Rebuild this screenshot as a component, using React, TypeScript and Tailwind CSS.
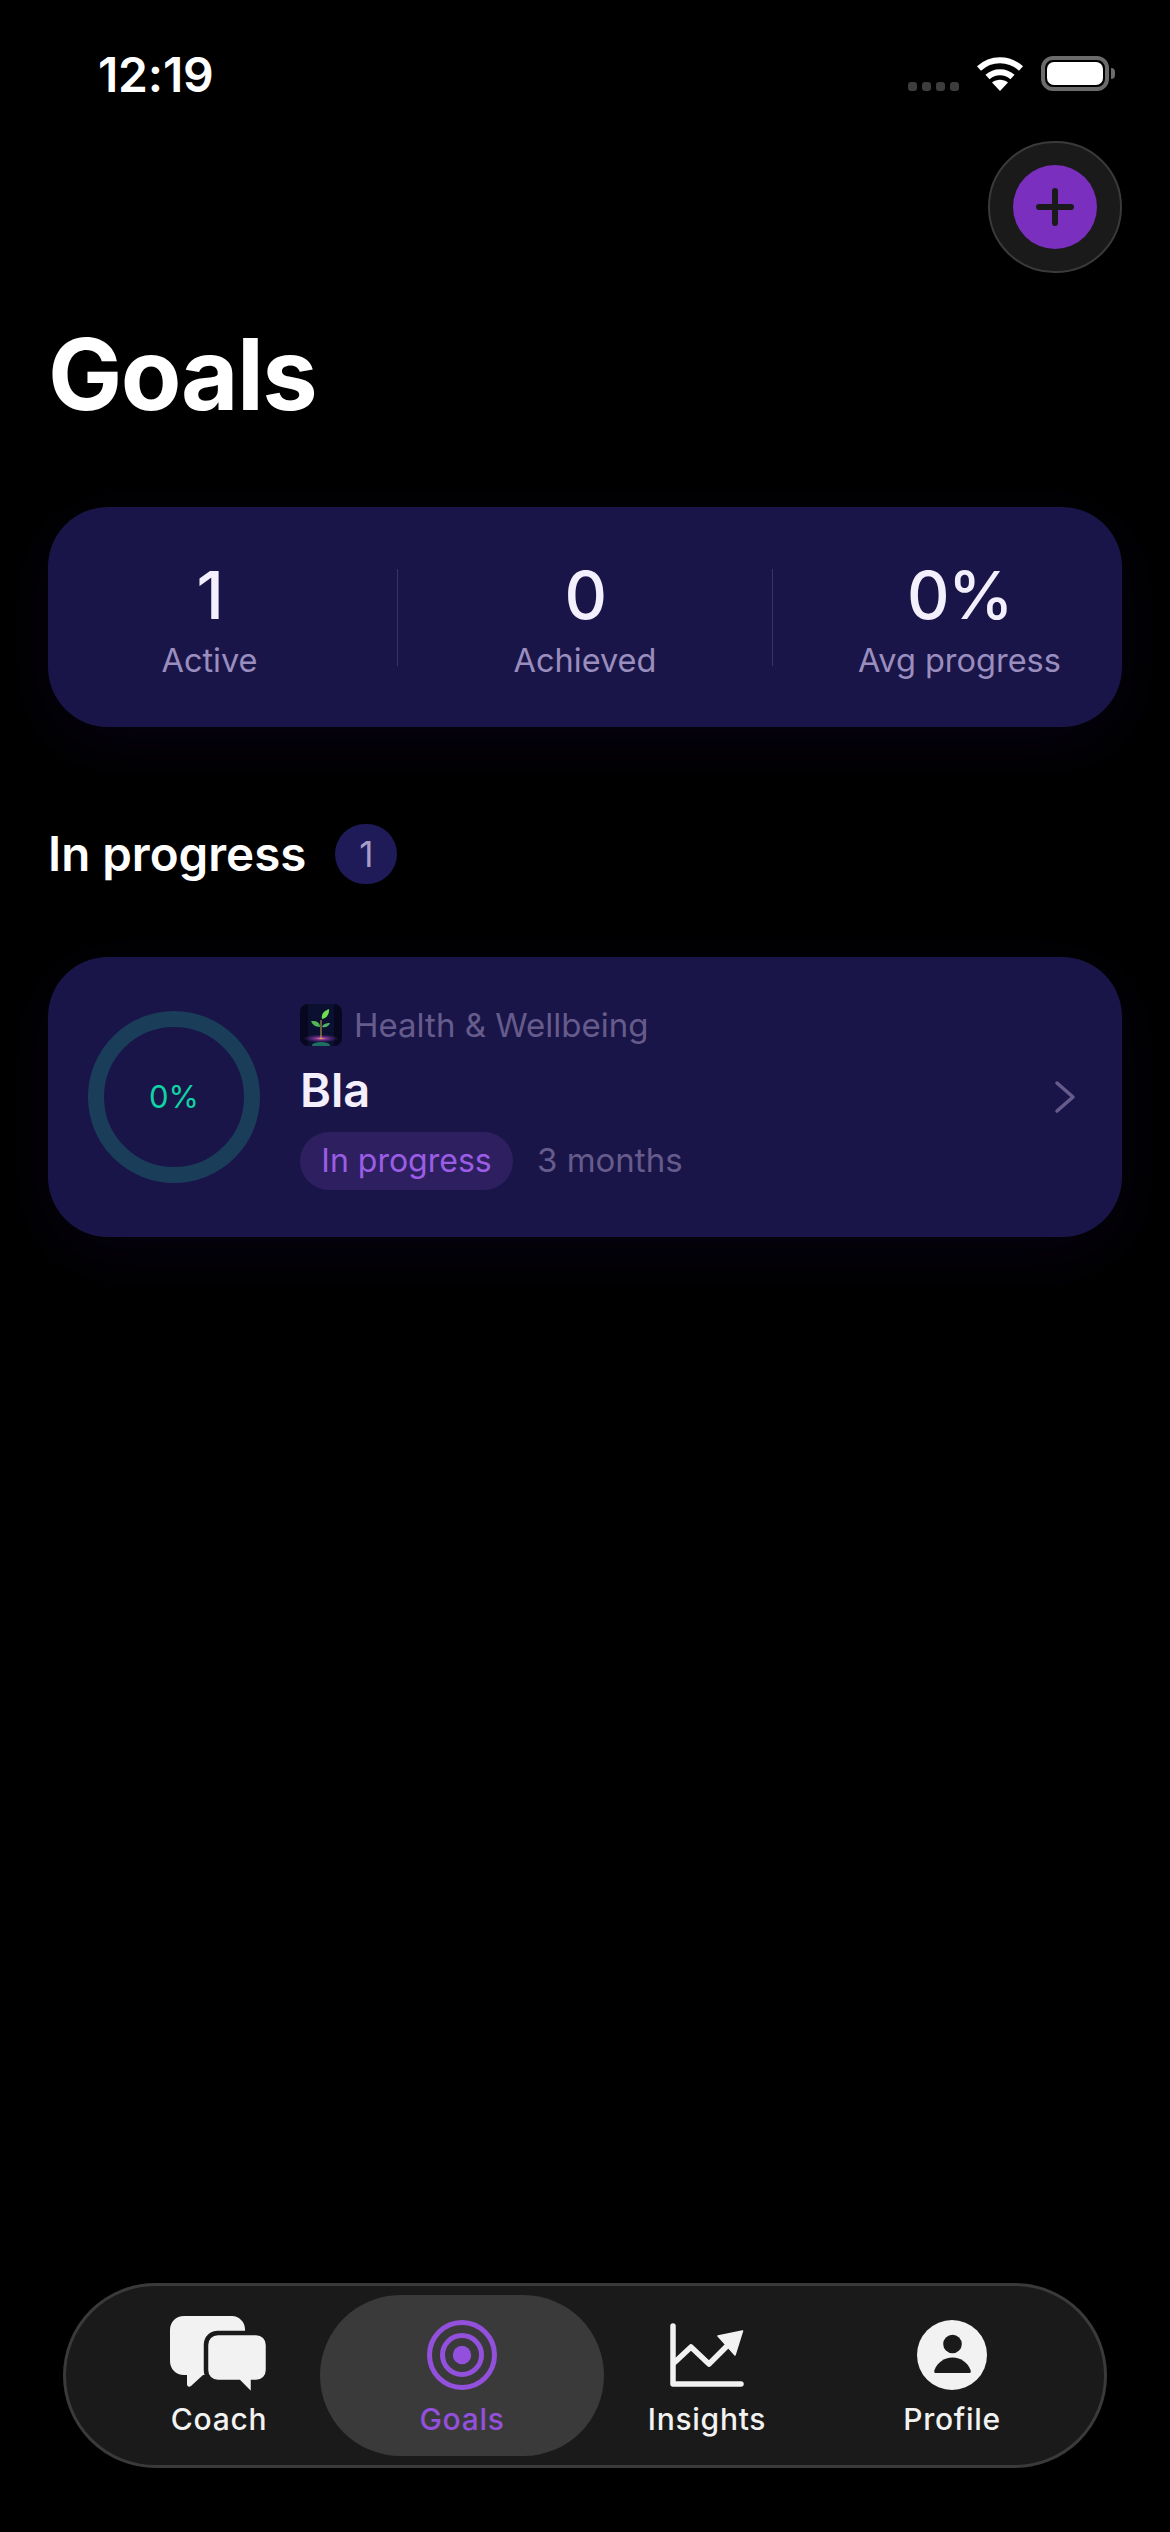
import React from "react";

const ff = { fontFamily: "Inter, 'Noto Sans', sans-serif" };

function ChatIcon() {
  return (
    <svg width="98" height="77" viewBox="0 0 98 77">
      <path d="M14 0H62C69 0 75 6 75 13V50C75 55 71 59 66 59H33L21 70C19 71.500 17 70.500 17 68V59H14C6 59 0 53 0 45V14C0 6 6 0 14 0Z" fill="#f2f2f2" />
      <path d="M48 17H86C93 17 98 22 98 29V54C98 61 93 66 86 66H83V74.500C83 77 80.500 77.500 79 76L69 66H48C41 66 36 61 36 54V29C36 22 41 17 48 17Z" fill="#f2f2f2" stroke="#1a1a1a" strokeWidth="4.500" />
    </svg>
  );
}

function TargetIcon() {
  return (
    <svg width="70" height="70" viewBox="0 0 70 70" fill="none" stroke="#9350dc" strokeWidth="5">
      <circle cx="35" cy="35" r="32.500" />
      <circle cx="35" cy="35" r="19.500" />
      <circle cx="35" cy="35" r="9.200" fill="#9350dc" stroke="none" />
    </svg>
  );
}

function InsightsIcon() {
  return (
    <svg width="74" height="64" viewBox="0 0 74 64" fill="none">
      <path d="M3 3V61H71" stroke="#f2f2f2" strokeWidth="5.500" strokeLinecap="round" strokeLinejoin="round" />
      <path d="M5 39L21 24L39 41L57 23" stroke="#f2f2f2" strokeWidth="5.500" strokeLinecap="round" strokeLinejoin="round" />
      <path d="M72.500 8L48 13L65 32Z" fill="#f2f2f2" stroke="#f2f2f2" strokeWidth="1.500" strokeLinejoin="round" />
    </svg>
  );
}

function ProfileIcon() {
  return (
    <svg width="70" height="70" viewBox="0 0 70 70">
      <circle cx="35" cy="35" r="35" fill="#f2f2f2" />
      <circle cx="35.500" cy="24" r="9.300" fill="#1a1a1a" />
      <path d="M18.500 53C17 53 17 51.500 17.500 50C20 43 27 37.500 35.500 37.500C44 37.500 51 43 53.500 50C54 51.500 54 53 52.500 53Z" fill="#1a1a1a" />
    </svg>
  );
}

function PlantIcon() {
  return (
    <svg width="42" height="42" viewBox="0 0 42 42" className="rounded-[8px]">
      <defs>
        <radialGradient id="glow" cx="50%" cy="50%" r="50%">
          <stop offset="0%" stopColor="#f59e42" />
          <stop offset="30%" stopColor="#a03fb0" stopOpacity="0.8" />
          <stop offset="100%" stopColor="#5b2a90" stopOpacity="0" />
        </radialGradient>
      </defs>
      <rect width="42" height="42" fill="#07081f" />
      <rect x="8" width="26" height="42" fill="#0c1030" />
      <ellipse cx="21" cy="34.500" rx="18" ry="4" fill="url(#glow)" />
      <ellipse cx="21" cy="41" rx="9" ry="3" fill="#1d6f5f" />
      <path d="M21 34V16" stroke="#c9a850" strokeWidth="1" />
      <path d="M22 15C21 10 24 7 29 5C29.500 10 27 14 22 15Z" fill="#6fdc52" />
      <path d="M20 23C15 23 12 20 11 17C16 16.500 20 18 20 23Z" fill="#4fb852" />
      <path d="M22 23C23 20 26 19 30 19C29 22 26 24 22 23Z" fill="#4fae6c" />
    </svg>
  );
}

function Stat({ value, label, cls }: { value: string; label: string; cls: string }) {
  return (
    <div className={`flex flex-col items-center pt-[6px] ${cls}`}>
      <span className="text-[66px] leading-[70px] font-medium tracking-[-1.5px] text-[#f3effc]">{value}</span>
      <span className="text-[32.5px] leading-[40px] mt-[11px] text-[#9a8ebf]">{label}</span>
    </div>
  );
}

function Tab({ icon, label, active, cls }: { icon: React.ReactNode; label: string; active?: boolean; cls: string }) {
  return (
    <div className={`flex flex-col items-center ${cls}`}>
      <div className="h-[80px] flex items-center justify-center">{icon}</div>
      <span className={`text-[30px] leading-[36px] tracking-[0.7px] font-medium mt-[6px] ${active ? "text-[#9350dc]" : "text-[#f2f2f2]"}`}>{label}</span>
    </div>
  );
}

export default function App() {
  return (
    <div style={ff} className="w-[1170px] h-[2532px] bg-black flex flex-col overflow-hidden text-white">
      <div className="h-[141px] pl-[98px] pr-[55px] pt-[51px] flex justify-between items-start">
        <span className="text-[48px] leading-[48px] font-semibold tracking-[-0.2px]">12:19</span>
        <div className="flex items-end mt-[4px]">
          <div className="flex gap-[5px]">
            <div className="w-[9px] h-[9px] rounded-[3px] bg-[#3d3d3d]" />
            <div className="w-[9px] h-[9px] rounded-[3px] bg-[#3d3d3d]" />
            <div className="w-[9px] h-[9px] rounded-[3px] bg-[#3d3d3d]" />
            <div className="w-[9px] h-[9px] rounded-[3px] bg-[#3d3d3d]" />
          </div>
          <svg width="48" height="36" viewBox="0 0 48 36" fill="none" className="ml-[17px]">
            <path d="M3 13.500C15 2.500 33 2.500 45 13.500" stroke="#fff" strokeWidth="6" />
            <path d="M11.500 22C18.500 15.500 29.500 15.500 36.500 22" stroke="#fff" strokeWidth="6" />
            <path d="M24 36L16 27.500C20.500 23.800 27.500 23.800 32 27.500Z" fill="#fff" />
          </svg>
          <div className="ml-[17px] flex items-center">
            <div className="w-[68px] h-[35px] border-[4px] border-[#6b6b6b] rounded-[12px] p-[2px]">
              <div className="w-full h-full bg-white rounded-[7px]" />
            </div>
            <div className="w-[4px] h-[11px] ml-[2px] bg-[#6b6b6b] rounded-r-[4px]" />
          </div>
        </div>
      </div>

      <div className="flex justify-end px-[48px]">
        <button className="w-[134px] h-[132px] rounded-full bg-[#1a1a1a] border-[2px] border-[#3a3a3a] flex items-center justify-center">
          <div className="w-[84px] h-[84px] rounded-full bg-[#7b2fbe] flex items-center justify-center">
            <svg width="38" height="38" viewBox="0 0 38 38" fill="none" stroke="#1a1a1a" strokeWidth="6" strokeLinecap="round">
              <path d="M19 3V35M3 19H35" />
            </svg>
          </div>
        </button>
      </div>

      <h1 className="mt-[46px] ml-[48px] text-[99px] leading-[110px] font-bold tracking-[-1.5px]">Goals</h1>

      <div className="mt-[78px] mx-[48px] h-[220px] rounded-[60px] bg-[#1a1548] shadow-[0_16px_60px_rgba(70,30,160,0.10)] flex items-center">
        <Stat value="1" label="Active" cls="w-[349px] pr-[26px]" />
        <div className="w-px h-[97px] bg-[#3a3266]" />
        <Stat value="0" label="Achieved" cls="w-[374px]" />
        <div className="w-px h-[97px] bg-[#3a3266]" />
        <Stat value="0%" label="Avg progress" cls="flex-1 pl-[24px]" />
      </div>

      <div className="mt-[97px] ml-[48px] flex items-center">
        <span className="text-[47.5px] leading-[60px] font-semibold">In progress</span>
        <span className="ml-[29px] w-[62px] h-[60px] rounded-full bg-[#1f1a58] text-[#a79dc9] text-[35px] flex items-center justify-center">1</span>
      </div>

      <div className="mt-[73px] mx-[48px] h-[280px] rounded-[60px] bg-[#1a1548] shadow-[0_16px_60px_rgba(70,30,160,0.10)] flex items-center pl-[40px] pr-[46px]">
        <div className="w-[172px] h-[172px] rounded-full border-[16px] border-[#1a3d5a] flex items-center justify-center text-[31px] text-[#10d3a5]">0%</div>
        <div className="ml-[40px] flex-1 flex flex-col items-start">
          <div className="flex items-center">
            <PlantIcon />
            <span className="ml-[12px] text-[33px] leading-[42px] text-[#665c8c]">Health &amp; Wellbeing</span>
          </div>
          <span className="mt-[14px] text-[47px] leading-[60px] font-semibold text-[#f3effc]">Bla</span>
          <div className="mt-[12px] flex items-center">
            <span className="h-[58px] w-[213px] rounded-full bg-[#2e2060] text-[#9b5de5] text-[32px] flex items-center justify-center">In progress</span>
            <span className="ml-[24px] text-[33px] text-[#665c8c]">3 months</span>
          </div>
        </div>
        <svg width="22" height="34" viewBox="0 0 22 34" fill="none" stroke="#665c8c" strokeWidth="3.500" strokeLinecap="round" strokeLinejoin="round">
          <path d="M3 3L19 17L3 31" />
        </svg>
      </div>

      <div className="mt-auto mb-[64px] mx-[63px] h-[185px] rounded-full bg-[#1a1a1a] border-[3px] border-[#3a3a3a] flex items-center pl-[62px]">
        <Tab icon={<ChatIcon />} label="Coach" cls="w-[182px]" />
        <div className="ml-[10px] w-[284px] h-[161px] rounded-full bg-[#3a3a3a] flex items-center justify-center">
          <Tab icon={<TargetIcon />} label="Goals" active cls="w-[180px]" />
        </div>
        <Tab icon={<InsightsIcon />} label="Insights" cls="w-[206px]" />
        <Tab icon={<ProfileIcon />} label="Profile" cls="w-[284px]" />
      </div>
    </div>
  );
}
